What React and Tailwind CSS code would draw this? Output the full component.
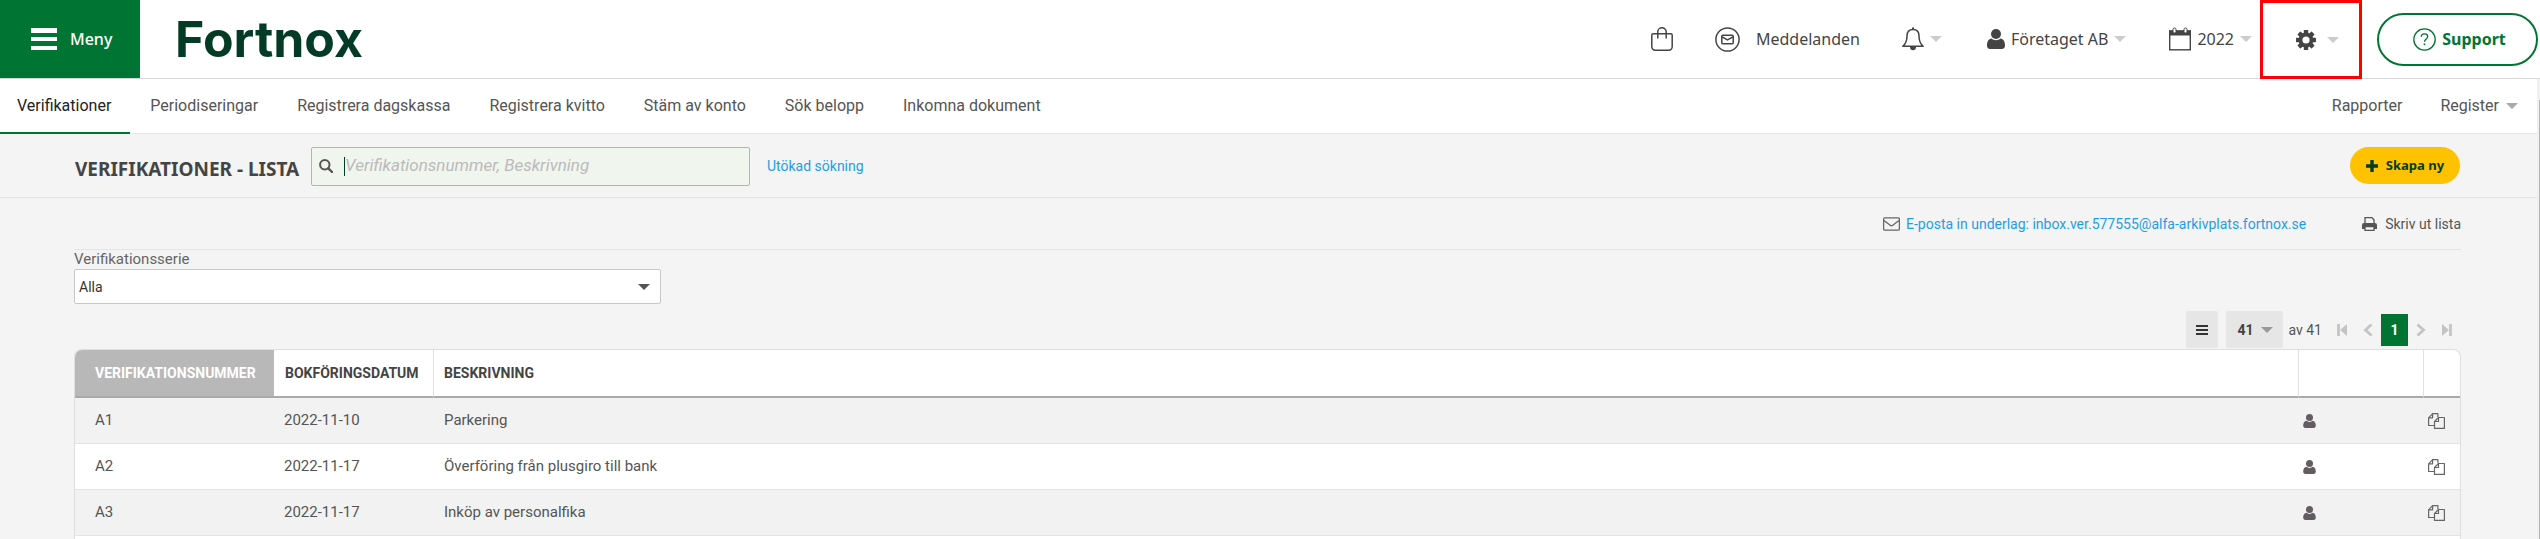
import React, { useState } from 'react';

const navLinks = [
    'Verifikationer',
    'Periodiseringar',
    'Registrera dagskassa',
    'Registrera kvitto',
    'Stäm av konto',
    'Sök belopp',
    'Inkomna dokument',
];

const vouchers = [
    { id: 'A1', date: '2022-11-10', text: 'Parkering' },
    { id: 'A2', date: '2022-11-17', text: 'Överföring från plusgiro till bank' },
    { id: 'A3', date: '2022-11-17', text: 'Inköp av personalfika' },
];

function Caret({ className }) {
    return (
        <svg viewBox="0 0 12 6" className={`w-3 h-[6px] shrink-0 ${className}`} fill="currentColor" aria-hidden="true">
            <path d="M0 0h12L6 6z" />
        </svg>
    );
}

function UserIcon({ className }) {
    return (
        <svg viewBox="0 0 18 20" className={className} fill="currentColor" aria-hidden="true">
            <circle cx="9" cy="5" r="5" />
            <path d="M4.6 9.600C1.600 10 0 12.500 0 16.500C0 18.700 1.200 20 3 20h12c1.800 0 3-1.300 3-3.500C18 12.500 16.400 10 13.400 9.600C12.300 10.600 10.800 11.300 9 11.300S5.700 10.600 4.600 9.600z" />
        </svg>
    );
}

function BagIcon() {
    return (
        <svg viewBox="0 0 22 24" className="w-[22px] h-6" fill="none" stroke="currentColor" strokeWidth="1.5" aria-hidden="true">
            <path d="M2.2 6.8h17.6a1.400 1.400 0 0 1 1.400 1.400v11.600a3.400 3.400 0 0 1-3.400 3.400H4.200a3.400 3.400 0 0 1-3.400-3.400V8.200a1.400 1.400 0 0 1 1.400-1.400z" />
            <path d="M6.8 11.500V4.800a4.200 4 0 0 1 8.400 0v6.700" />
        </svg>
    );
}

function MessageIcon() {
    return (
        <svg viewBox="0 0 25 25" className="w-[25px] h-[25px]" fill="none" stroke="currentColor" strokeWidth="1.5" aria-hidden="true">
            <circle cx="12.5" cy="12.5" r="11.6" />
            <rect x="6.8" y="8.3" width="11.4" height="8.4" rx="1" />
            <path d="M7 9.800l5.500 3.200L18 9.800" />
        </svg>
    );
}

function BellIcon() {
    return (
        <svg viewBox="0 0 22 24" className="w-[22px] h-6" fill="none" stroke="currentColor" strokeWidth="1.5" strokeLinejoin="round" aria-hidden="true">
            <path d="M11 2.500c-4 0-6 2.700-6 6.500 0 6-1.800 8.300-4.200 10.300h20.400C18.800 17.300 17 15 17 9c0-3.800-2-6.500-6-6.500z" />
            <path d="M11 .5v2" strokeWidth="2" />
            <path d="M8 20h6c0 2-1.200 3.300-3 3.300S8 22 8 20z" fill="currentColor" stroke="none" />
        </svg>
    );
}

function CalendarIcon() {
    return (
        <svg viewBox="0 0 22 24" className="w-[22px] h-6" aria-hidden="true">
            <rect x=".7" y="4" width="20.6" height="18.8" fill="#fff" stroke="currentColor" strokeWidth="1.4" />
            <path d="M0 3.500h22V8.500H0z" fill="currentColor" />
            <rect x="4" y="1" width="3" height="5" rx="1.5" fill="#fff" stroke="currentColor" />
            <rect x="15" y="1" width="3" height="5" rx="1.5" fill="#fff" stroke="currentColor" />
        </svg>
    );
}

function GearIcon() {
    return (
        <svg viewBox="-10 -10 20 20" className="w-5 h-5" fill="currentColor" aria-hidden="true">
            {[0, 45, 90, 135].map((a) => (
                <rect key={a} x="-2.2" y="-10" width="4.4" height="20" rx=".6" transform={`rotate(${a})`} />
            ))}
            <circle r="7.4" />
            <circle r="3.6" fill="#fff" />
        </svg>
    );
}

function HelpIcon() {
    return (
        <svg viewBox="0 0 23 23" className="w-[23px] h-[23px]" fill="none" stroke="currentColor" strokeWidth="1.3" aria-hidden="true">
            <circle cx="11.5" cy="11.5" r="10.7" />
            <path d="M8.300 8.800c0-2 1.400-3 3.200-3s3.200 1 3.200 2.800c0 2.400-3.200 2.500-3.200 5.200" />
            <path d="M11.500 15.500v1.700" strokeWidth="1.6" />
        </svg>
    );
}

function SearchIcon() {
    return (
        <svg viewBox="0 0 14 14" className="w-[14px] h-[14px] shrink-0 text-[#555]" fill="none" stroke="currentColor" aria-hidden="true">
            <circle cx="5.8" cy="5.8" r="4.7" strokeWidth="2" />
            <path d="M9.300 9.300l3.700 3.700" strokeWidth="2.4" strokeLinecap="round" />
        </svg>
    );
}

function EnvelopeIcon() {
    return (
        <svg viewBox="0 0 17 14" className="w-[17px] h-[14px]" fill="none" stroke="currentColor" strokeWidth="1.3" aria-hidden="true">
            <rect x=".6" y=".8" width="15.8" height="12.4" rx="1.3" />
            <path d="M1 3.500l6.200 4.800c.8.600 1.800.6 2.600 0L16 3.500" />
        </svg>
    );
}

function PrintIcon() {
    return (
        <svg viewBox="0 0 15 14" className="w-[15px] h-[14px]" aria-hidden="true">
            <path d="M3 7V.7h7L12 2.700V7" fill="none" stroke="currentColor" strokeWidth="1.3" />
            <path d="M0 8a2 2 0 0 1 2-2h11a2 2 0 0 1 2 2v4H0z" fill="currentColor" />
            <path d="M3 9.500h9v3.800H3z" fill="#f4f4f4" stroke="currentColor" strokeWidth="1.3" />
        </svg>
    );
}

function CopyIcon() {
    return (
        <svg viewBox="0 0 17 16" className="w-[17px] h-4" fill="none" stroke="currentColor" strokeWidth="1.2" strokeLinejoin="round" aria-hidden="true">
            <path d="M6 12.500H.6V4.800L4.600.6h5.300V4" />
            <path d="M4.600.8v4H.8" />
            <path d="M6.500 8.500l4-4h5.900v10.900H6.500z" />
            <path d="M10.500 4.500v4h-4" />
        </svg>
    );
}

function PagerIcon({ name }) {
    const shapes = {
        first: (
            <>
                <path d="M1.500 1v12" />
                <path d="M10 1L3 7l7 6z" fill="currentColor" stroke="none" />
            </>
        ),
        prev: <path d="M8.500 1.500L2.500 7l6 5.500" />,
        next: <path d="M1.500 1.500l6 5.500-6 5.500" />,
        last: (
            <>
                <path d="M8.500 1v12" />
                <path d="M0 1l7 6-7 6z" fill="currentColor" stroke="none" />
            </>
        ),
    };
    return (
        <svg viewBox="0 0 10 14" className="w-[10px] h-[14px]" fill="none" stroke="currentColor" strokeWidth="2.8" aria-hidden="true">
            {shapes[name]}
        </svg>
    );
}

function Header() {
    return (
        <header className="h-[79px] shrink-0 flex items-stretch justify-between border-b border-[#d8d8d8] bg-white text-[#444] font-['Noto_Sans',sans-serif] text-base">
            <div className="flex items-stretch">
                <button className="w-[140px] pl-[31px] flex items-center gap-[13px] bg-[#007533] text-white font-medium cursor-pointer">
                    <svg viewBox="0 0 26 22" className="w-[26px] h-[22px]" fill="currentColor" aria-hidden="true">
                        <path d="M0 0h26v5H0zM0 9h26v4H0zM0 18h26v4H0z" />
                    </svg>
                    Meny
                </button>
                <a href="#" className="ml-[35px] flex items-center text-[#033b26] font-['Inter',sans-serif] font-bold text-[50px]">
                    Fortnox
                </a>
            </div>

            <div className="flex items-center">
                <button className="mr-[42px] cursor-pointer" aria-label="Butik">
                    <BagIcon />
                </button>
                <button className="mr-[42px] flex items-center gap-4 cursor-pointer">
                    <MessageIcon />
                    Meddelanden
                </button>
                <button className="mr-[45px] flex items-center gap-[6px] cursor-pointer" aria-label="Notiser">
                    <BellIcon />
                    <Caret className="text-[#ccc]" />
                </button>
                <button className="mr-[43px] flex items-center gap-[6px] cursor-pointer">
                    <UserIcon className="w-[18px] h-5" />
                    Företaget AB
                    <Caret className="text-[#ccc]" />
                </button>
                <button className="mr-2 flex items-center gap-[6px] cursor-pointer">
                    <CalendarIcon />
                    2022
                    <Caret className="text-[#ccc]" />
                </button>
                <button className="-mb-px self-stretch w-[102px] mr-[15px] flex items-center justify-center gap-[11px] pl-3 border-3 border-[#f00] cursor-pointer" aria-label="Inställningar">
                    <GearIcon />
                    <Caret className="text-[#ccc]" />
                </button>
                <button className="w-[161px] h-[53px] mr-[2px] pl-1 flex items-center justify-center gap-[6px] rounded-full border-2 border-[#007533] text-[#007533] font-bold cursor-pointer">
                    <HelpIcon />
                    Support
                </button>
            </div>
        </header>
    );
}

function SubNav() {
    return (
        <nav className="h-[55px] shrink-0 flex items-stretch justify-between bg-white border-b border-[#e4e4e4] text-base text-[#555]">
            <div className="flex items-stretch">
                {navLinks.map((label, i) => (
                    <a
                        key={label}
                        href="#"
                        className={`-mb-px flex items-center border-b-2 ${i === 0 ? 'pl-[17px] pr-[19px] border-[#007533] text-[#222]' : 'pl-5 pr-[19px] border-transparent'}`}
                    >
                        {label}
                    </a>
                ))}
            </div>
            <div className="flex items-center gap-[38px] pr-[19px]">
                <a href="#">Rapporter</a>
                <a href="#" className="flex items-center gap-[7px]">
                    Register
                    <Caret className="text-[#aaa]" />
                </a>
            </div>
        </nav>
    );
}

function Pager() {
    const [size, setSize] = useState('41');

    return (
        <div className="flex items-center justify-end text-sm text-[#555]">
            <button className="w-8 h-[37px] mr-2 flex items-center justify-center rounded-xs bg-[#e6e6e6] text-[#333] cursor-pointer" aria-label="Visa kolumner">
                <svg viewBox="0 0 12 10" className="w-3 h-[10px]" fill="currentColor" aria-hidden="true">
                    <path d="M0 0h12v2H0zM0 4h12v2H0zM0 8h12v2H0z" />
                </svg>
            </button>
            <label className="relative mr-[5px] flex items-center">
                <select
                    aria-label="Rader per sida"
                    className="w-[57px] h-[37px] pl-[11px] appearance-none rounded-xs bg-[#e6e6e6] font-bold text-[#444] cursor-pointer"
                    value={size}
                    onChange={(e) => setSize(e.target.value)}
                >
                    <option>41</option>
                </select>
                <Caret className="absolute right-[10px] text-[#999] pointer-events-none" />
            </label>
            av 41
            <div className="ml-[15px] flex items-center text-[#c4c4c4]">
                <button className="mr-4 cursor-pointer" aria-label="Första sidan"><PagerIcon name="first" /></button>
                <button className="mr-2 cursor-pointer" aria-label="Föregående sida"><PagerIcon name="prev" /></button>
                <button className="w-[27px] h-8 mr-2 bg-[#007533] text-white font-bold cursor-pointer">1</button>
                <button className="mr-4 cursor-pointer" aria-label="Nästa sida"><PagerIcon name="next" /></button>
                <button className="mr-[9px] cursor-pointer" aria-label="Sista sidan"><PagerIcon name="last" /></button>
            </div>
        </div>
    );
}

function VoucherTable() {
    return (
        <div className="flex-1 min-h-0 overflow-hidden bg-white border border-b-0 border-[#dedede] rounded-t-lg">
            <table className="w-full table-fixed border-separate border-spacing-0 text-[15px] text-[#555]">
                <colgroup>
                    <col className="w-[199px]" />
                    <col className="w-[160px]" />
                    <col />
                    <col className="w-[125px]" />
                    <col className="w-9" />
                </colgroup>
                <thead className="text-sm text-[#444] text-left">
                    <tr className="h-12">
                        <th className="pl-5 border-b-2 border-[#a9a9a9] bg-[#b8b8b8] text-white font-bold">VERIFIKATIONSNUMMER</th>
                        <th className="pl-[11px] border-b-2 border-r border-r-[#e0e0e0] border-b-[#a9a9a9] font-bold">BOKFÖRINGSDATUM</th>
                        <th className="pl-[10px] border-b-2 border-r border-r-[#e0e0e0] border-b-[#a9a9a9] font-bold">BESKRIVNING</th>
                        <th className="border-b-2 border-r border-r-[#e0e0e0] border-b-[#a9a9a9]" />
                        <th className="border-b-2 border-[#a9a9a9]" />
                    </tr>
                </thead>
                <tbody>
                    {vouchers.map((v) => (
                        <tr key={v.id} className="h-[46px] odd:bg-[#f2f2f2] *:border-b *:border-[#e4e4e4]">
                            <td className="pl-5">{v.id}</td>
                            <td className="pl-[10px]">{v.date}</td>
                            <td className="pl-[10px]">{v.text}</td>
                            <td className="pl-1">
                                <UserIcon className="w-[13px] h-[14px] text-[#635c61]" />
                            </td>
                            <td className="pl-1 text-[#666]">
                                <button className="flex cursor-pointer" aria-label={`Kopiera ${v.id}`}><CopyIcon /></button>
                            </td>
                        </tr>
                    ))}
                </tbody>
            </table>
        </div>
    );
}

export default function App() {
    const [query, setQuery] = useState('');

    return (
        <div className="h-screen flex flex-col overflow-hidden bg-[#f4f4f4] font-['Roboto',sans-serif]">
            <Header />

            <div className="flex-1 min-h-0 flex">
                <div className="flex-1 min-w-0 flex flex-col">
                    <SubNav />

                    {/* Title and search */}
                    <div className="h-16 shrink-0 pl-[75px] pr-[77px] flex items-center border-b border-[#e4e4e4]">
                        <h1 className="mt-[7px] w-[236px] shrink-0 whitespace-nowrap font-['Noto_Sans',sans-serif] text-[19px] font-bold text-[#444]">
                            VERIFIKATIONER - LISTA
                        </h1>
                        <label className="w-[439px] h-[39px] mt-px pl-[7px] flex items-center rounded-xs border border-[#b4b4b4] bg-[#f0f5ee]">
                            <SearchIcon />
                            <span className="ml-[11px] w-px h-[19px] shrink-0 bg-[#033b26]" />
                            <input
                                type="text"
                                aria-label="Sök verifikation"
                                className="flex-1 min-w-0 bg-transparent text-[17px] text-[#444] placeholder:italic placeholder:text-[#bbb] focus:outline-none"
                                placeholder="Verifikationsnummer, Beskrivning"
                                value={query}
                                onChange={(e) => setQuery(e.target.value)}
                            />
                        </label>
                        <a href="#" className="ml-[17px] text-sm text-[#1d9ee8]">Utökad sökning</a>
                        <button className="ml-auto w-[110px] h-[37px] flex items-center justify-center gap-2 rounded-full bg-[#ffc200] text-[#033b26] font-['Noto_Sans',sans-serif] text-[13px] font-bold cursor-pointer">
                            <svg viewBox="0 0 12 12" className="w-3 h-3" fill="currentColor" aria-hidden="true">
                                <path d="M4.300 0h3.400v4.300H12v3.400H7.700V12H4.300V7.700H0V4.300h4.300z" />
                            </svg>
                            Skapa ny
                        </button>
                    </div>

                    <main className="flex-1 min-h-0 pl-[74px] pr-[76px] flex flex-col">
                        <div className="h-[52px] shrink-0 flex items-center justify-end gap-14 border-b border-[#e4e4e4] text-sm text-[#555]">
                            <a href="#" className="flex items-center gap-[6px] text-[#1d9ee8]">
                                <span className="text-[#666]"><EnvelopeIcon /></span>
                                E-posta in underlag: inbox.ver.577555@alfa-arkivplats.fortnox.se
                            </a>
                            <button className="flex items-center gap-2 cursor-pointer">
                                <PrintIcon />
                                Skriv ut lista
                            </button>
                        </div>

                        <label htmlFor="series" className="h-[19px] shrink-0 leading-[19px] text-[15px] text-[#666]">Verifikationsserie</label>
                        <div className="relative w-[587px] shrink-0 flex items-center">
                            <select id="series" className="w-full h-[35px] pl-1 appearance-none rounded-xs border border-[#c8c8c8] bg-white text-sm text-[#333]">
                                <option>Alla</option>
                            </select>
                            <Caret className="absolute right-[11px] text-[#555] pointer-events-none" />
                        </div>

                        <div className="mt-[7px] mb-px">
                            <Pager />
                        </div>

                        <VoucherTable />
                    </main>
                </div>

                {/* Scroll track */}
                <div className="w-[3px] shrink-0 pt-[21px] flex justify-end bg-[#f0f0f0]">
                    <div className="w-px bg-[#b5b5b5]" />
                </div>
            </div>
        </div>
    );
}
